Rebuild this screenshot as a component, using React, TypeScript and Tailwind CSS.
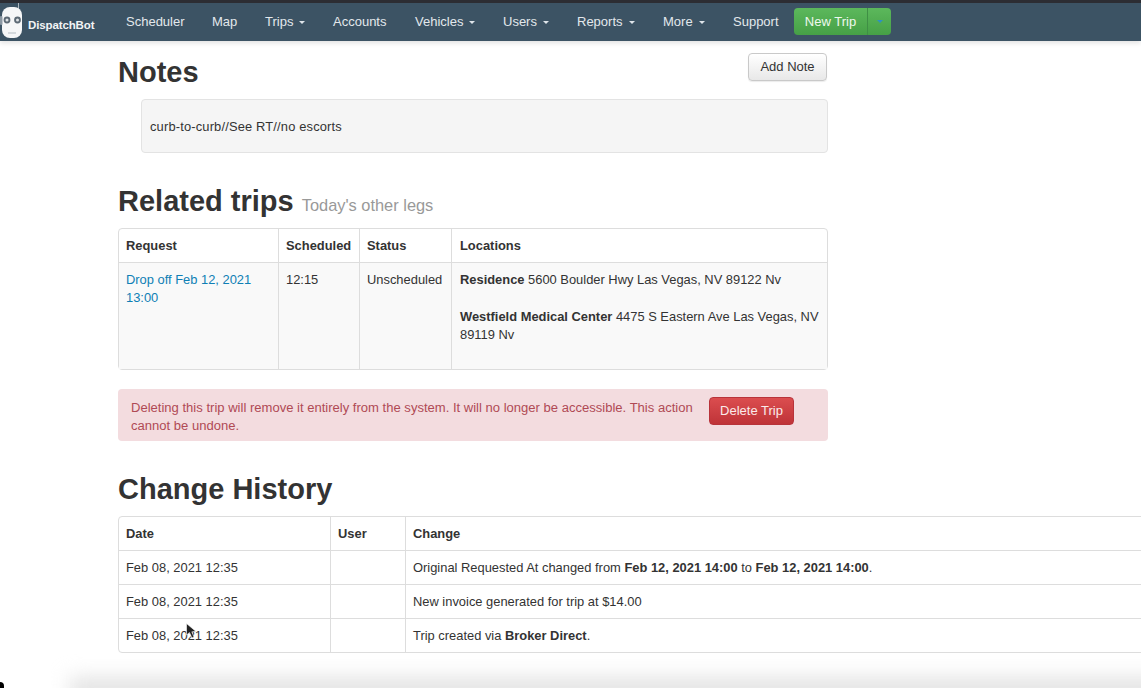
const navItems = [
  { label: 'Scheduler', w: 'w-[86px]' },
  { label: 'Map', w: 'w-[53px]' },
  { label: 'Trips', caret: true, w: 'w-[68px]' },
  { label: 'Accounts', w: 'w-[82px]' },
  { label: 'Vehicles', caret: true, w: 'w-[88px]' },
  { label: 'Users', caret: true, w: 'w-[74px]' },
  { label: 'Reports', caret: true, w: 'w-[86px]' },
  { label: 'More', caret: true, w: 'w-[70px]' },
  { label: 'Support', w: 'w-[75px]' },
]

const history = [
  {
    date: 'Feb 08, 2021 12:35',
    change: (
      <>
        Original Requested At changed from <b>Feb 12, 2021 14:00</b> to <b>Feb 12, 2021 14:00</b>.
      </>
    ),
  },
  { date: 'Feb 08, 2021 12:35', change: <>New invoice generated for trip at $14.00</> },
  {
    date: 'Feb 08, 2021 12:35',
    change: (
      <>
        Trip created via <b>Broker Direct</b>.
      </>
    ),
  },
]

function Caret({ className = 'ml-[6px] border-t-[#dfe5ea]' }: { className?: string }) {
  return <span className={`inline-block h-0 w-0 border-x-[3px] border-t-[3px] border-x-transparent align-middle ${className}`} />
}

function Logo() {
  return (
    <svg width="26" height="38" viewBox="0 0 26 38" className="shrink-0">
      <line x1="18.5" y1="0" x2="18.5" y2="6" stroke="#aeb8c0" strokeWidth="1" />
      <rect x="2" y="4" width="20" height="31" rx="8" fill="#f6f7f8" />
      <rect x="0" y="13" width="2.5" height="9" rx="1" fill="#8b98a3" />
      <circle cx="7" cy="17" r="3.4" fill="#5d6a75" />
      <circle cx="17.5" cy="17" r="3.4" fill="#5d6a75" />
      <circle cx="7" cy="17" r="1.5" fill="#dfe3e6" />
      <circle cx="17.5" cy="17" r="1.5" fill="#dfe3e6" />
      <line x1="8" y1="30" x2="16" y2="30" stroke="#b4bcc3" strokeWidth="1" />
    </svg>
  )
}

export default function App() {
  return (
    <div className="relative h-[688px] w-[1141px] overflow-hidden bg-white font-['Liberation_Sans',Arial,sans-serif] text-[12.9px] leading-[18px] text-[#333]">
      <header className="h-[41px] border-t-[3px] border-[#2c2d33] bg-[#3c5364] shadow-[0_2px_5px_rgba(0,0,0,0.12)]">
        <nav className="flex h-full items-center">
          <div className="flex w-[112px] items-center self-start text-[#f2f4f5]">
            <Logo />
            <span className="ml-[2px] mt-[6px] self-center text-[11.5px] font-bold tracking-[-0.12px]">DispatchBot</span>
          </div>
          {navItems.map((item) => (
            <a key={item.label} className={`${item.w} whitespace-nowrap pl-[14px] text-[13px] text-[#e3e8ec]`}>
              {item.label}
              {item.caret && <Caret />}
            </a>
          ))}
          <div className="mb-[1px] flex h-[27px] rounded-[4px] bg-gradient-to-b from-[#5cb85c] to-[#46a046] text-[13px] text-[#eef8ee]">
            <span className="flex w-[74px] items-center justify-center border-r border-[#3f8f45]">New Trip</span>
            <span className="flex w-[23px] items-center justify-center">
              <Caret className="border-t-[#2f8fc4]" />
            </span>
          </div>
        </nav>
      </header>

      <main className="ml-[118px] w-[710px]">
        <div className="flex items-start justify-between pt-[12px]">
          <h2 className="pt-[1px] text-[29px] font-bold leading-[36px]">Notes</h2>
          <button className="mr-[1px] h-[28px] w-[79px] rounded-[4px] border border-[#c9c9c9] bg-gradient-to-b from-white to-[#e8e8e8] text-[13px] text-[#333] shadow-[0_1px_1px_rgba(0,0,0,0.08)]">
            Add Note
          </button>
        </div>

        <div className="ml-[23px] mt-[9px] flex h-[54px] items-center rounded-[4px] border border-[#e3e3e3] bg-[#f5f5f5] pl-[8px] pt-[1px] tracking-[0.16px]">
          curb-to-curb//See RT//no escorts
        </div>

        <h2 className="mt-[30px] text-[29px] font-bold leading-[36px]">
          Related trips <small className="text-[16.4px] font-normal text-[#999]">Today's other legs</small>
        </h2>

        <table className="mt-[5px] w-[710px] table-fixed border-separate border-spacing-0 rounded-[4px] border border-[#ddd]">
          <colgroup>
            <col className="w-[159px]" />
            <col className="w-[81px]" />
            <col className="w-[92px]" />
            <col />
          </colgroup>
          <thead>
            <tr className="h-[33px] text-left">
              <th className="px-[7px] font-bold">Request</th>
              <th className="border-l border-[#ddd] px-[7px] font-bold">Scheduled</th>
              <th className="border-l border-[#ddd] px-[7px] font-bold">Status</th>
              <th className="border-l border-[#ddd] pl-[8px] font-bold">Locations</th>
            </tr>
          </thead>
          <tbody className="bg-[#f9f9f9] align-top">
            <tr className="h-[107px]">
              <td className="border-t border-[#ddd] px-[7px] pt-[8px] text-[#0f7fb5]">Drop off Feb 12, 2021 13:00</td>
              <td className="border-l border-t border-[#ddd] px-[7px] pt-[8px]">12:15</td>
              <td className="border-l border-t border-[#ddd] px-[7px] pt-[8px]">Unscheduled</td>
              <td className="border-l border-t border-[#ddd] pl-[8px] pr-[2px] pt-[8px]">
                <p>
                  <b>Residence</b> 5600 Boulder Hwy Las Vegas, NV 89122 Nv
                </p>
                <p className="mt-[19px]">
                  <b>Westfield Medical Center</b> 4475 S Eastern Ave Las Vegas, NV 89119 Nv
                </p>
              </td>
            </tr>
          </tbody>
        </table>

        <div className="mt-[19px] flex h-[52px] rounded-[4px] bg-[#f3dcdf] pl-[13px] pt-[8px] text-[13.05px] text-[#b04a55]">
          <p className="mt-[2px] w-[578px]">
            Deleting this trip will remove it entirely from the system. It will no longer be accessible. This action cannot be undone.
          </p>
          <button className="h-[28px] w-[85px] rounded-[4px] border border-[#b8333a] bg-gradient-to-b from-[#db4d4f] to-[#bf3338] text-[13px] text-[#fbeaea]">
            Delete Trip
          </button>
        </div>

        <h2 className="mt-[30px] text-[29px] font-bold leading-[36px]">Change History</h2>

        <table className="mt-[9px] w-[1040px] table-fixed border-separate border-spacing-0 rounded-[4px] border border-[#ddd]">
          <colgroup>
            <col className="w-[211px]" />
            <col className="w-[75px]" />
            <col />
          </colgroup>
          <thead>
            <tr className="h-[33px] text-left">
              <th className="px-[7px] font-bold">Date</th>
              <th className="border-l border-[#ddd] px-[7px] font-bold">User</th>
              <th className="border-l border-[#ddd] px-[7px] font-bold">Change</th>
            </tr>
          </thead>
          <tbody>
            {history.map((row, i) => (
              <tr key={i} className="h-[34px]">
                <td className="border-t border-[#ddd] px-[7px]">{row.date}</td>
                <td className="border-l border-t border-[#ddd] px-[7px]" />
                <td className="border-l border-t border-[#ddd] px-[7px]">{row.change}</td>
              </tr>
            ))}
          </tbody>
        </table>
      </main>

      {/* mouse pointer from the screen recording */}
      <svg width="11" height="16" viewBox="0 0 11 16" className="absolute left-[186px] top-[623px]">
        <path d="M0.5 0.5 L0.5 12 L3.5 9.5 L6 15 L8 14 L5.8 8.8 L10 8.5 Z" fill="#222" stroke="#fff" strokeWidth="0.6" />
      </svg>

      {/* bottom edge shadow of the recorded window */}
      <div className="absolute bottom-[-12px] left-[70px] h-[22px] w-[1100px] bg-[#e0e0e0] blur-[10px]" />
      <div className="absolute bottom-0 left-0 h-[6px] w-[4px] rounded-tr-[4px] bg-black" />
    </div>
  )
}
